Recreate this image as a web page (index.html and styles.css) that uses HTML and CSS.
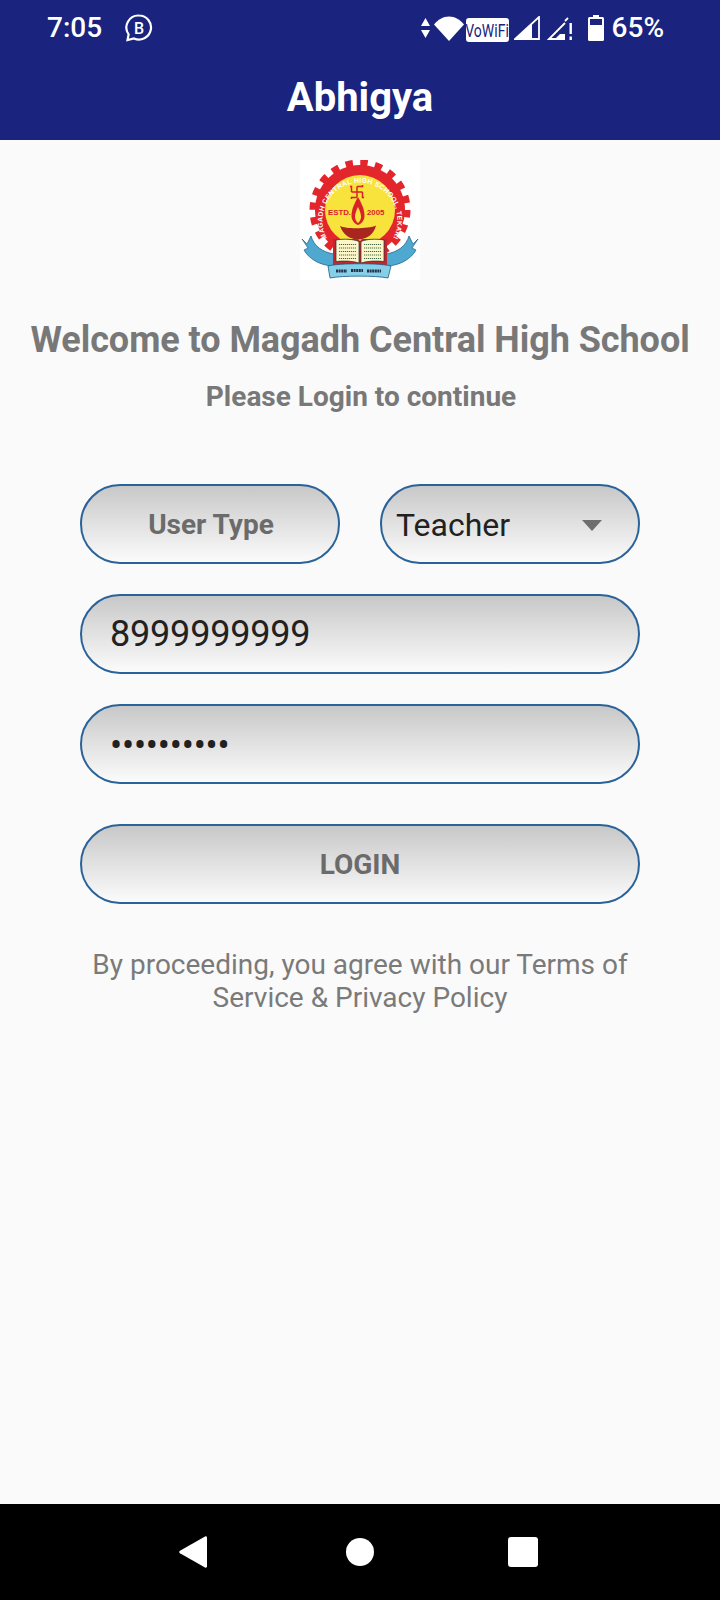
FILE: index.html
```html
<!DOCTYPE html>
<html lang="en">
<head>
<meta charset="utf-8">
<title>Abhigya</title>
<link rel="stylesheet" href="styles.css">
</head>
<body>
<div class="screen">
  <header class="appbar">
    <div class="status">
      <div class="status-left">
        <span class="time">7:05</span>
        <svg class="biz" width="28" height="28" viewBox="0 0 28 28">
          <path d="M14 1.500a12 12 0 1 1-5 22.900L2.500 26 3.600 20.400A12 12 0 0 1 14 1.500z" fill="none" stroke="#fff" stroke-width="2.200"/>
          <text x="14" y="19.500" text-anchor="middle" class="biz-b">B</text>
        </svg>
      </div>
      <div class="status-right">
        <svg class="i-arrows" width="9" height="20" viewBox="0 0 9 20"><path d="M4.500 0 9 8H0zM0 12h9l-4.500 8z" fill="#fff"/></svg>
        <svg class="i-wifi" width="30" height="25" viewBox="0 0 30 25"><path d="M15 25 0 8.500C4 3.500 9 .5 15 .5s11 3 15 8z" fill="#fff"/></svg>
        <span class="vowifi"><span class="vowifi-t">VoWiFi</span></span>
        <svg class="i-sig" width="26" height="24" viewBox="0 0 26 24">
          <path d="M25 1v22H1z" fill="none" stroke="#fff" stroke-width="1.800"/>
          <path d="M18 8v16H0z" fill="#fff"/>
        </svg>
        <svg class="i-sig2" width="26" height="24" viewBox="0 0 26 24">
          <path d="M18 7 2 23h16" fill="none" stroke="#fff" stroke-width="1.800"/>
          <path d="M21 2 18 5" stroke="#fff" stroke-width="1.800"/>
          <path d="M8 23 13 18h5v5z" fill="#fff"/>
          <path d="M22.500 7h2.400v11h-2.400zM22.500 20.500h2.400V24h-2.400z" fill="#fff"/>
        </svg>
        <svg class="i-bat" width="16" height="26" viewBox="0 0 16 26"><path fill-rule="evenodd" d="M5 0h6v2h3.500A1.500 1.500 0 0 1 16 3.500v21a1.500 1.500 0 0 1-1.500 1.500h-13A1.500 1.500 0 0 1 0 24.500v-21A1.500 1.500 0 0 1 1.500 2H5zM2 4v6h12V4z" fill="#fff"/></svg>
        <span class="pct">65%</span>
      </div>
    </div>
    <div class="toolbar">Abhigya</div>
  </header>

  <main class="content">
    <svg class="logo" width="120" height="120" viewBox="0 0 120 120">
      <rect width="120" height="120" fill="#fff"/>
      <circle cx="60" cy="50" r="47" fill="none" stroke="#e2262b" stroke-width="7" stroke-dasharray="7.380 7.380"/>
      <circle cx="60" cy="50" r="45" fill="#e2262b"/>
      <circle cx="60" cy="50" r="35" fill="#f8e23c"/>
      <defs><path id="ring" d="M27 78A37.500 37.500 0 1 1 93 78"/></defs>
      <text class="ring-t"><textPath href="#ring">MAGADH CENTRAL HIGH SCHOOL, TEKARI</textPath></text>
      <path d="M51.500 32h11M57 26.500v11M51.500 32v-5.500h-1.500M62.500 32v5.500h1.500M57 26.500h5.500V25M57 37.500h-5.500V39" fill="none" stroke="#d8222a" stroke-width="1.500"/>
      <text x="28" y="54.500" class="est">ESTD.</text>
      <text x="67" y="54.500" class="est">2005</text>
      <path d="M58 37c-4.500 8-6.500 13-6.500 19 0 4 3 8 6.500 9 3.500-1 6.500-5 6.500-9 0-6-2-11-6.500-19z" fill="#d8222a"/>
      <path d="M58 47c-2 4-3 7-3 10 0 2.500 1.500 5 3 6 1.500-1 3-3.500 3-6 0-3-1-6-3-10z" fill="#f8e23c"/>
      <path d="M40 66c6 3 28 3 36-.500-2 9-10 14-18 14s-15-5-18-13.500z" fill="#a8261f"/>
      <path d="M2 79 7 84 11 76C14 86 22 92 34 94V106C20 106 8 98 4 90L8 88z" fill="#4fa8d0" stroke="#1d5b86" stroke-width=".7"/>
      <path d="M118 79 113 84 109 76C106 86 98 92 86 94V106C100 106 112 98 116 90L112 88z" fill="#4fa8d0" stroke="#1d5b86" stroke-width=".7"/>
      <path d="M33 79h25l2 2 2-2h25v26H33z" fill="#c1272d"/>
      <path d="M36 80c8-1.500 17-1 23 1.500V103c-6-2-15-2.500-23-1.500z" fill="#fdf6c8" stroke="#27313f" stroke-width=".7"/>
      <path d="M84 80c-8-1.500-17-1-23 1.500V103c6-2 15-2.500 23-1.500z" fill="#fdf6c8" stroke="#27313f" stroke-width=".7"/>
      <path d="M39 84.500h17M39 88h17M39 91.500h17M39 95h17M39 98.500h17M64 84.500h17M64 88h17M64 91.500h17M64 95h17M64 98.500h17" stroke="#3c6a4a" stroke-width="1.200" stroke-dasharray="1.200 .8"/>
      <path d="M28 106c10-3 54-3 63 0l-3 12c-12-2.500-46-2.500-58 0z" fill="#86cfe8" stroke="#1d5b86" stroke-width=".8"/>
      <path d="M36 111h11M51 110.500h12M67 111h14" stroke="#26304a" stroke-width="3" stroke-dasharray="2 .6"/>
    </svg>

    <h1 class="welcome">Welcome to Magadh Central High School</h1>
    <p class="please">Please Login to continue</p>

    <form class="form">
      <div class="row">
        <div class="field field-half field-label">User Type</div>
        <div class="field field-half field-select">
          <span class="value value-select">Teacher</span>
          <svg class="caret" width="20" height="11" viewBox="0 0 20 11"><path d="M0 0h20L10 11z" fill="#6e6e6e"/></svg>
        </div>
      </div>
      <div class="field field-input"><span class="value value-digits">8999999999</span></div>
      <div class="field field-input field-password"><span class="value value-dots">••••••••••</span></div>
      <div class="field field-label field-login">LOGIN</div>
    </form>

    <p class="terms">By proceeding, you agree with our Terms of Service &amp; Privacy Policy</p>
  </main>

  <nav class="navbar">
    <svg class="nav-back" width="28" height="32" viewBox="0 0 28 32"><path d="M26 .4a1.500 1.500 0 0 1 2 1.300v28.600a1.500 1.500 0 0 1-2 1.300L1 17.300a1.500 1.500 0 0 1 0-2.600z" fill="#fff"/></svg>
    <svg class="nav-home" width="28" height="28" viewBox="0 0 28 28"><circle cx="14" cy="14" r="14" fill="#fff"/></svg>
    <svg class="nav-recent" width="30" height="30" viewBox="0 0 30 30"><rect width="30" height="30" rx="3" fill="#fff"/></svg>
  </nav>
</div>
</body>
</html>
```
FILE: styles.css
```css
* { box-sizing: border-box; }

html, body {
  margin: 0;
  padding: 0;
}

body {
  font-family: Roboto, "Liberation Sans", sans-serif;
  background: #fafafa;
}

.screen {
  width: 720px;
  height: 1600px;
  display: flex;
  flex-direction: column;
  overflow: hidden;
}

.appbar {
  height: 140px;
  background: #1a237e;
  color: #fff;
  flex: none;
}

.status {
  height: 56px;
  display: flex;
  align-items: center;
  justify-content: space-between;
  padding: 0 56px 0 47px;
}

.status-left,
.status-right {
  display: flex;
  align-items: center;
}

.time {
  font-size: 28px;
  line-height: 32px;
  font-weight: 500;
}

.biz {
  margin-left: 23px;
}

.biz-b {
  font-family: Roboto, sans-serif;
  font-size: 16px;
  font-weight: 500;
  fill: #fff;
}

.i-wifi { margin-left: 4px; }
.i-sig { margin-left: 5px; }
.i-sig2 { margin-left: 7px; }
.i-bat { margin-left: 15px; }

.vowifi {
  width: 43px;
  height: 24px;
  margin-left: 2px;
  margin-top: 3px;
  border-radius: 3px;
  background: #fff;
  display: flex;
  align-items: center;
  justify-content: center;
}

.vowifi-t {
  font-size: 14px;
  line-height: 16px;
  color: #1a237e;
  transform: scaleY(1.35);
}

.pct {
  font-size: 28px;
  line-height: 32px;
  font-weight: 500;
  margin-left: 8px;
}

.toolbar {
  height: 84px;
  padding-bottom: 2px;
  display: flex;
  align-items: center;
  justify-content: center;
  font-size: 40px;
  font-weight: 700;
}

.content {
  flex: 1;
  display: flex;
  flex-direction: column;
  align-items: center;
  padding: 20px 40px 0;
  background: #fafafa;
}

.logo {
  flex: none;
  display: block;
}

.ring-t {
  font-family: "Liberation Sans", sans-serif;
  font-size: 6.800px;
  font-weight: 700;
  fill: #fff;
  letter-spacing: .3px;
}

.est {
  font-family: "Liberation Sans", sans-serif;
  font-size: 7.800px;
  font-weight: 700;
  fill: #d8222a;
}

.welcome {
  margin: 36px 0 0;
  font-size: 36px;
  line-height: 48px;
  font-weight: 700;
  letter-spacing: -.05px;
  color: #787878;
  white-space: nowrap;
}

.please {
  margin: 13px 0 0 2px;
  font-size: 28px;
  line-height: 40px;
  font-weight: 700;
  color: #787878;
}

.form {
  width: 560px;
  margin-top: 67px;
  display: flex;
  flex-direction: column;
  gap: 30px;
}

.row {
  display: flex;
  justify-content: space-between;
}

.field {
  height: 80px;
  border: 2px solid #2a6399;
  border-radius: 40px;
  background: linear-gradient(180deg, #c8c8c8 0%, #fbfbfb 100%);
  display: flex;
  align-items: center;
}

.field-half {
  width: 260px;
}

.field-label {
  justify-content: center;
  padding-top: 1px;
  font-size: 28px;
  font-weight: 700;
  color: #6b6b6b;
}

.field-half.field-label {
  padding-left: 2px;
}

.field-select {
  justify-content: space-between;
  padding: 2px 36px 0 14px;
}

.field-input {
  padding: 0 28px;
}

.field-password {
  padding-top: 4px;
}

.value {
  font-size: 36px;
  color: #212121;
}

.value-select {
  font-size: 32px;
}

.value-digits {
  letter-spacing: -.2px;
}

.value-dots {
  letter-spacing: -.2px;
}

.field-login {
  margin-top: 10px;
}

.terms {
  width: 560px;
  margin: 44px 0 0;
  font-size: 28px;
  line-height: 33px;
  text-align: center;
  color: #7a7a7a;
}

.navbar {
  height: 96px;
  flex: none;
  background: #000;
  display: flex;
  align-items: center;
  padding-left: 179px;
}

.nav-home { margin-left: 139px; }
.nav-recent { margin-left: 134px; }
```
